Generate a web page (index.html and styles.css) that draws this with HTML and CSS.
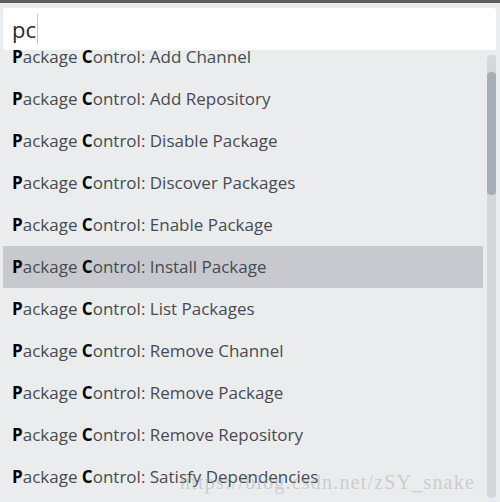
FILE: index.html
```html
<!DOCTYPE html>
<html>
<head>
<meta charset="utf-8">
<link rel="stylesheet" href="styles.css">
</head>
<body>
<div class="topbar"></div>
<div class="panel">
  <div class="input"><span class="query">pc</span><span class="caret"></span></div>
  <div class="results">
    <div class="list">
      <div class="row"><b>P</b>ackage <b>C</b>ontrol: Add Channel</div>
      <div class="row"><b>P</b>ackage <b>C</b>ontrol: Add Repository</div>
      <div class="row"><b>P</b>ackage <b>C</b>ontrol: Disable Package</div>
      <div class="row"><b>P</b>ackage <b>C</b>ontrol: Discover Packages</div>
      <div class="row"><b>P</b>ackage <b>C</b>ontrol: Enable Package</div>
      <div class="row selected"><b>P</b>ackage <b>C</b>ontrol: Install Package</div>
      <div class="row"><b>P</b>ackage <b>C</b>ontrol: List Packages</div>
      <div class="row"><b>P</b>ackage <b>C</b>ontrol: Remove Channel</div>
      <div class="row"><b>P</b>ackage <b>C</b>ontrol: Remove Package</div>
      <div class="row"><b>P</b>ackage <b>C</b>ontrol: Remove Repository</div>
      <div class="row"><b>P</b>ackage <b>C</b>ontrol: Satisfy Dependencies</div>
      <div class="row"><b>P</b>ackage <b>C</b>ontrol: Upgrade Package</div>
    </div>
    <div class="scrollbar"><div class="thumb"></div></div>
    <div class="watermark">https://blog.csdn.net/zSY_snake</div>
  </div>
</div>
</body>
</html>
```
FILE: styles.css
```css
html, body {
  margin: 0;
  padding: 0;
  width: 500px;
  height: 502px;
  overflow: hidden;
  background: #ebecee;
  font-family: "Open Sans", "Noto Sans", sans-serif;
}
.topbar {
  height: 3px;
  background: #5f5f5c;
}
.panel {
  padding: 5px 4px 0 3px;
}
.input {
  height: 42px;
  background: #ffffff;
  border-radius: 2px;
  display: flex;
  align-items: center;
  padding-left: 9px;
}
.query {
  font-size: 22px;
  color: #2a2a2a;
  line-height: 1;
  margin-top: -1px;
}
.caret {
  width: 1px;
  height: 30px;
  background: #c8c8c8;
  margin-left: 1px;
}
.results {
  position: relative;
  height: 452px;
  overflow: hidden;
  display: flex;
}
.list {
  flex: 1;
  margin-top: -14px;
  margin-right: 4px;
}
.row {
  height: 42px;
  line-height: 42px;
  padding-left: 9px;
  font-size: 17px;
  color: #474b52;
  white-space: nowrap;
}
.row b {
  color: #000;
  font-weight: 700;
}
.row.selected {
  background: #c7c9cf;
}
.scrollbar {
  width: 9px;
  margin-top: 5px;
  height: 443px;
  border-radius: 4px;
  background: #d6d7db;
  position: relative;
  flex: none;
}
.thumb {
  position: absolute;
  left: 0;
  top: 17px;
  width: 9px;
  height: 123px;
  border-radius: 4px;
  background: #abadb4;
}
.watermark {
  position: absolute;
  left: 177px;
  top: 421px;
  font-family: "Liberation Serif", serif;
  font-size: 20px;
  letter-spacing: 1.2px;
  color: rgba(165, 165, 165, 0.45);
  white-space: nowrap;
  pointer-events: none;
}
```
